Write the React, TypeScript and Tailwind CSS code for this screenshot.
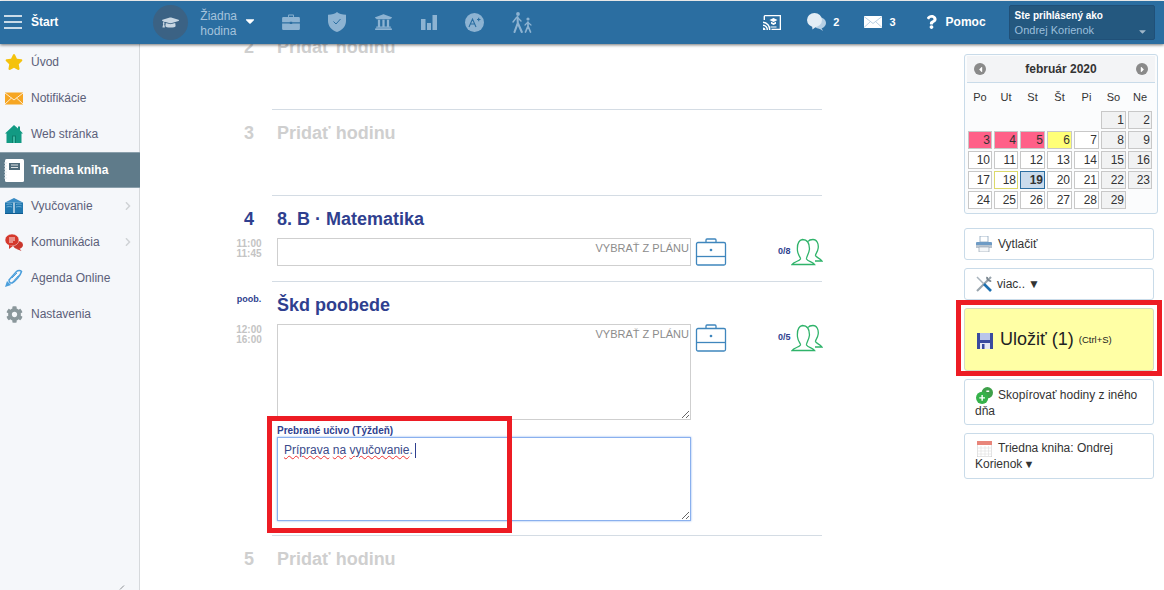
import React from "react";
import { FaStar, FaCog, FaGraduationCap, FaUniversity, FaQuestion, FaCaretDown, FaChevronRight, FaCaretLeft, FaCaretRight } from "react-icons/fa";

const F = "font-['Liberation_Sans',Arial,sans-serif]";

function Briefcase({ className = "" }: { className?: string }) {
  return (
    <svg viewBox="0 0 30 27" className={className} fill="currentColor">
      <path d="M10 5V2.5A1.5 1.5 0 0 1 11.5 1h7A1.5 1.5 0 0 1 20 2.500V5h-1.500V2.500h-7V5z" />
      <path d="M2 5h26a2 2 0 0 1 2 2v7H17v-1h-4v1H0V7a2 2 0 0 1 2-2z" />
      <path d="M0 16h13v1h4v-1h13v9a2 2 0 0 1-2 2H2a2 2 0 0 1-2-2z" />
    </svg>
  );
}
function OutlineCase() {
  return (
    <svg viewBox="0 0 32 28" className="w-[32px] h-[28px] text-[#3f86bd]" fill="none" stroke="currentColor" strokeWidth="1.300">
      <path d="M11 4.500V2a1 1 0 0 1 1-1h8a1 1 0 0 1 1 1v2.500" />
      <rect x="1.500" y="4.500" width="29" height="22.500" rx="1.500" />
      <path d="M1.500 18.500h29" />
      <circle cx="16" cy="12" r="0.700" fill="currentColor" />
    </svg>
  );
}
function People() {
  return (
    <svg viewBox="0 0 32 28" className="w-[32px] h-[28px] text-[#2fb36a]" fill="none" stroke="currentColor" strokeWidth="1.300">
      <path d="M1 26.500c2-3 7-3 8.500-5.500 .5-1-2.500-3.500-3-8-.4-4.500 0-10.500 5-11.500 4 0 7 3 7 9.500-.5 5-3.500 8-3 10 1.500 2.500 6 2.800 8 5.500z" />
      <path d="M17 3.500C18 2 20.500 1.500 22 1.500c4 0 5.700 4.500 5.200 8.500-.4 4-3 6-2.700 7.500.5 2 4.500 2.500 6.500 5.500h-7" />
    </svg>
  );
}
function Shield() {
  return (
    <svg viewBox="0 0 18 20" className="w-[18px] h-[20px]">
      <path d="M9 0c2 1.800 5 2.600 9 2.700V9c0 5-3.500 9-9 11-5.500-2-9-6-9-11V2.700C4 2.600 7 1.800 9 0z" fill="#8db3d2" />
      <path d="M5.500 9.500 8 12l4.500-5" fill="none" stroke="#2b6ea1" strokeWidth="1" />
    </svg>
  );
}
function Bars() {
  return (
    <svg viewBox="0 0 16 16" className="w-[16px] h-[16px]" fill="#8db3d2">
      <rect x="0" y="5" width="4.500" height="11" />
      <rect x="6" y="9" width="4" height="7" />
      <rect x="11.500" y="1" width="4.500" height="15" />
    </svg>
  );
}
function Grade() {
  return (
    <div className="w-[19px] h-[19px] rounded-full bg-[#8db3d2] flex items-center justify-center">
      <svg viewBox="0 0 19 19" className="w-[19px] h-[19px]" fill="none" stroke="#2b6ea1" strokeWidth="1.100">
        <path d="M4 14 7.500 6 11 14M5.300 11h4.400M12 6.500h3.500M13.700 4.800v3.400" />
      </svg>
    </div>
  );
}
function Hikers() {
  return (
    <svg viewBox="0 0 21 21" className="w-[21px] h-[21px]" fill="none" stroke="#8db3d2" strokeLinecap="round">
      <circle cx="6" cy="2" r="1.900" fill="#8db3d2" stroke="none" />
      <path d="M5.500 5 5.800 11 2.500 20M5.800 11l4 9" strokeWidth="2.100" />
      <path d="M5.500 5.500 9 9M4.500 5.500 1 10" strokeWidth="1.400" />
      <circle cx="16" cy="7" r="1.600" fill="#8db3d2" stroke="none" />
      <path d="M16 10v4l-2.500 6M16 14l2.500 6" strokeWidth="1.700" />
      <path d="M16 10.500l3 2.500M15.500 10.500 13 13" strokeWidth="1.200" />
    </svg>
  );
}
function Cast() {
  return (
    <svg viewBox="0 0 18 15" className="w-[18px] h-[15px]" fill="#fff">
      <path d="M2 0h16v15H8.500v-1.300h8.200V1.300H2V5H.6V1.500A1.500 1.500 0 0 1 2 0z" />
      <path d="M0 6.500A8 8 0 0 1 7.500 15H6A6.500 6.500 0 0 0 0 8zM0 9.500A5 5 0 0 1 5 15H3.500A3.500 3.500 0 0 0 0 11zM0 12.500A2.500 2.500 0 0 1 2.500 15H0z" />
      <path d="M10.500 3 14.500 5l-4 2-4-2zM8 6.800l2.500 1.200 2.500-1.200v2L10.500 10 8 8.800zM7.500 11.500h6V12.500h-6z" />
    </svg>
  );
}
function Bubbles() {
  return (
    <svg viewBox="0 0 19 18" className="w-[19px] h-[18px]">
      <ellipse cx="12.500" cy="10" rx="6.500" ry="5.800" fill="#b7d0e4" />
      <path d="M14 14l2 4-4.500-3z" fill="#b7d0e4" />
      <ellipse cx="7.500" cy="7" rx="7.500" ry="7" fill="#e3edf5" />
      <path d="M5 12l.5 4.500L10 13z" fill="#e3edf5" />
    </svg>
  );
}
function Mail({ w, h, bg, line }: { w: number; h: number; bg: string; line: string }) {
  return (
    <svg viewBox="0 0 18 12" width={w} height={h}>
      <rect width="18" height="12" fill={bg} />
      <path d="M0 .5 9 7.500 18 .5M0 11.500 6.500 5.500M18 11.500 11.500 5.500" fill="none" stroke={line} strokeWidth="0.800" />
    </svg>
  );
}
function House() {
  return (
    <svg viewBox="0 0 18 18" className="w-[18px] h-[18px]">
      <path d="M9 0 13 3.500V1.500h2v3.800L18 8.500H16.500V18h-15V8.500H0z" fill="#129a83" />
      <rect x="7" y="10.500" width="4" height="7.500" fill="#0c7d6a" />
      <rect x="8" y="11.500" width="2" height="6.500" fill="#3cb8a2" />
    </svg>
  );
}
function Notebook() {
  return (
    <svg viewBox="0 0 20 23" className="w-[20px] h-[23px]">
      <rect x="1" y="0" width="19" height="23" rx="1.500" fill="#fff" />
      <rect x="5" y="4" width="11" height="7" fill="#4f6b7a" />
      <path d="M7 6h7M7 8.500h7" stroke="#fff" strokeWidth="0.800" />
      <path d="M0 4h3M0 7h3M0 10h3M0 13h3M0 16h3M0 19h3" stroke="#dfe6ea" strokeWidth="1" />
    </svg>
  );
}
function Book() {
  return (
    <svg viewBox="0 0 18 16" className="w-[18px] h-[16px]">
      <path d="M9 0 18 4.500H0z" fill="#3a8cc4" />
      <path d="M0 4.500h8.400V15H0zM9.600 4.500H18V15H9.600z" fill="#2178b0" />
      <path d="M1.500 6.500c2-.6 4-.6 5.500 0M1.500 9c2-.6 4-.6 5.500 0M11 6.500c2-.6 4-.6 5.500 0M11 9c2-.6 4-.6 5.500 0" stroke="#9fd0ee" strokeWidth="0.600" fill="none" />
      <path d="M0 15h18v1H0z" fill="#0f5b8f" />
    </svg>
  );
}
function Chat() {
  return (
    <svg viewBox="0 0 18 17" className="w-[18px] h-[17px]">
      <ellipse cx="13" cy="11" rx="5" ry="4" fill="#c9362c" />
      <path d="M14 14l2.500 3-5-2z" fill="#c9362c" />
      <ellipse cx="7" cy="6" rx="7" ry="6" fill="#d5382c" stroke="#f5f7fa" strokeWidth="0.500" />
      <path d="M4 11l0 4 4-3z" fill="#d5382c" />
      <path d="M4 4h6M4 6h6M4 8h4" stroke="#fff" strokeWidth="0.900" />
    </svg>
  );
}
function Pen() {
  return (
    <svg viewBox="0 0 18 18" className="w-[18px] h-[18px]" fill="none" stroke="#4b9fdc" strokeWidth="1.500">
      <path d="M4 11 11.500 2.500c1.500-1.500 4-1.500 5 0-1 4-6 9.500-9.500 11.500-1.500.5-3-1-3-3z" />
      <path d="M7 9l5-5M9 11.500l4.500-5" strokeWidth="1" />
      <path d="M0 18l2-6 4 4z" fill="#4b9fdc" stroke="none" />
    </svg>
  );
}
function Printer() {
  return (
    <svg viewBox="0 0 16 16" className="w-[16px] h-[16px] mr-[6px] shrink-0">
      <path d="M4 0h8v6H4z" fill="#fff" stroke="#8aa3bb" strokeWidth="0.800" />
      <path d="M1 6h14a1 1 0 0 1 1 1v5H0V7a1 1 0 0 1 1-1z" fill="#6e9bc5" />
      <path d="M0 9h16v3H0z" fill="#b9c4cf" />
      <path d="M3 11h10v5H3z" fill="#f4f6f8" stroke="#9aa7b4" strokeWidth="0.700" />
    </svg>
  );
}
function Tools() {
  return (
    <svg viewBox="0 0 16 16" className="w-[16px] h-[16px] mr-[5px] shrink-0" fill="none">
      <path d="M15 1 1 15" stroke="#9aa5ae" strokeWidth="2.200" />
      <path d="M11 .8a3.800 3.800 0 0 0 4.200 4.200" stroke="#7b8790" strokeWidth="1.800" />
      <path d="M1 1 8 8" stroke="#a9b4bd" strokeWidth="1.500" />
      <path d="M8 8 15 15" stroke="#1d6fb0" strokeWidth="2.600" />
    </svg>
  );
}
function Floppy() {
  return (
    <svg viewBox="0 0 16 16" className="w-[16px] h-[16px] mr-[7px] mt-[2px] shrink-0">
      <rect width="16" height="16" fill="#3a4b9f" />
      <rect x="3" y="0" width="10" height="7" fill="#b9c5ea" />
      <rect x="3" y="10" width="10" height="6" fill="#e6e9f5" />
      <rect x="5" y="11" width="2.500" height="5" fill="#3a4b9f" />
    </svg>
  );
}
function Copy() {
  return (
    <svg viewBox="0 0 18 18" width="17" height="17">
      <circle cx="12" cy="6" r="6" fill="#3ea04a" />
      <circle cx="6.500" cy="11.500" r="6.500" fill="#35b24a" />
      <path d="M6.500 8.500v6M3.500 11.500h6M11 4.500h3" stroke="#fff" strokeWidth="1.500" />
    </svg>
  );
}
function Cal() {
  return (
    <svg viewBox="0 0 15 16" width="15" height="16">
      <rect width="15" height="16" fill="#fff" stroke="#c8c8c8" />
      <rect width="15" height="4" fill="#e8857a" />
      <path d="M1 7h13M1 10h13M1 13h13M4 5v10M8 5v10M11.500 5v10" stroke="#e2e2e2" strokeWidth="0.700" />
    </svg>
  );
}

const side: { t: string; i: React.ReactNode; chev?: boolean; active?: boolean }[] = [
  { t: "Úvod", i: <FaStar className="w-[18px] h-[18px] text-[#f4c20d]" /> },
  { t: "Notifikácie", i: <Mail w={18} h={13} bg="#f6a623" line="#fff" /> },
  { t: "Web stránka", i: <House /> },
  { t: "Triedna kniha", i: <Notebook />, active: true },
  { t: "Vyučovanie", i: <Book />, chev: true },
  { t: "Komunikácia", i: <Chat />, chev: true },
  { t: "Agenda Online", i: <Pen /> },
  { t: "Nastavenia", i: <FaCog className="w-[17px] h-[17px] text-[#8a979b]" /> },
];

type CalCell = { d?: number; k?: string };
const calCells: CalCell[] = [
  {}, {}, {}, {}, {}, { d: 1, k: "we" }, { d: 2, k: "we" },
  { d: 3, k: "red" }, { d: 4, k: "red" }, { d: 5, k: "red" }, { d: 6, k: "yel" }, { d: 7 }, { d: 8, k: "we" }, { d: 9, k: "we" },
  { d: 10 }, { d: 11 }, { d: 12 }, { d: 13 }, { d: 14 }, { d: 15, k: "we" }, { d: 16, k: "we" },
  { d: 17 }, { d: 18, k: "ybd" }, { d: 19, k: "today" }, { d: 20 }, { d: 21 }, { d: 22, k: "we" }, { d: 23, k: "we" },
  { d: 24 }, { d: 25 }, { d: 26 }, { d: 27 }, { d: 28 }, { d: 29, k: "we" }, {},
];
function cellCls(k?: string) {
  switch (k) {
    case "we": return "border-[#c8c8c8] bg-[#f1f2f3]";
    case "red": return "border-[#c8c8c8] bg-[#ff6088]";
    case "yel": return "border-[#c8c8c8] bg-[#ffff77]";
    case "ybd": return "border-[#dcd96a] bg-white";
    case "today": return "border-[#2b6ea1] bg-[#c9dbec] font-bold";
    default: return "border-[#c8c8c8] bg-white";
  }
}

function Plan({ h, handle }: { h: string; handle?: boolean }) {
  return (
    <div className="relative w-[414px] shrink-0">
      <textarea readOnly className={`block w-full ${h} border border-[#cfcfcf] outline-none ${handle ? "" : "resize-none"}`} />
      <span className="absolute top-[3px] right-[2px] text-[11px] leading-[14px] text-[#8c8c8c]">VYBRAŤ Z PLÁNU</span>
    </div>
  );
}

function Empty({ n, h }: { n: number; h: string }) {
  return (
    <section className={`border-t border-[#d4dce4] ${h} relative`}>
      <div className="flex items-center h-[46px] -ml-[44px]">
        <span className="w-[42px] text-center text-[18px] font-bold text-[#cfcfcf]">{n}</span>
        <span className="ml-[7px] text-[18px] font-bold text-[#cfcfcf]">Pridať hodinu</span>
      </div>
    </section>
  );
}

function Times({ a, b }: { a: string; b: string }) {
  return (
    <div className="w-[42px] shrink-0 text-center text-[10px] leading-[10px] font-bold text-[#c4c4c4] pt-[1px]">
      {a}<br />{b}
    </div>
  );
}

function Btn({ children, cls }: { children: React.ReactNode; cls: string }) {
  return (
    <div className={`w-[190px] border border-[#c9dbe9] rounded-[3px] px-[11px] text-[12px] leading-[15px] text-[#333] ${cls}`}>
      {children}
    </div>
  );
}

export default function App() {
  return (
    <div className={`${F} relative w-[1164px] h-[590px] overflow-hidden bg-white flex flex-col`}>
      <header className="relative z-10 h-[43px] mt-[1px] pb-[1px] shrink-0 bg-[#2b6ea1] shadow-[0_1px_3px_rgba(0,0,0,0.55)] flex items-center text-white">
        <svg viewBox="0 0 18 14" className="w-[18px] h-[14px] ml-[4px]" stroke="#fff" strokeWidth="1.500"><path d="M0 1h18M0 7h18M0 13h18" /></svg>
        <span className="ml-[9px] text-[12px] font-bold">Štart</span>
        <div className="ml-[95px] w-[35px] h-[35px] rounded-full bg-[#3b6284] flex items-center justify-center">
          <FaGraduationCap className="w-[17px] h-[17px] text-[#c8d6e2]" />
        </div>
        <div className="ml-[12px] mt-[3px] text-[12px] leading-[15px] text-[#a5c3dc] w-[40px]">Žiadna<br />hodina</div>
        <FaCaretDown className="w-[14px] h-[14px] ml-[3px] -mt-[2px] text-white" />
        <div className="ml-[25px] flex items-center gap-[28px]">
          <Briefcase className="w-[18px] h-[16px] text-[#8db3d2]" />
          <Shield />
          <FaUniversity className="w-[19px] h-[18px] text-[#8db3d2]" />
          <Bars />
          <Grade />
          <Hikers />
        </div>
        <div className="ml-[230px]"><Cast /></div>
        <div className="ml-[26px]"><Bubbles /></div>
        <span className="ml-[7px] text-[11px] font-bold">2</span>
        <div className="ml-[25px]"><Mail w={18} h={12} bg="#fff" line="#a9c4da" /></div>
        <span className="ml-[7px] text-[11px] font-bold">3</span>
        <FaQuestion className="w-[11px] h-[14px] ml-[30px]" />
        <span className="ml-[9px] text-[12px] font-bold">Pomoc</span>
        <div className="relative ml-[23px] mt-[1px] w-[146px] h-[35px] rounded-[2px] bg-[#24587f] border border-[#205078] pl-[5px] pt-[3px] leading-[14px]">
          <div className="text-[10px] font-bold text-white">Ste prihlásený ako</div>
          <div className="text-[11px] text-[#9bbfdc]">Ondrej Korienok</div>
          <FaCaretDown className="absolute right-[6px] bottom-[2px] w-[11px] h-[11px] text-[#9fb6c9]" />
        </div>
      </header>

      <div className="flex flex-1 min-h-0">
        <aside className="w-[140px] shrink-0 bg-[#f5f7fa] border-r border-[#d6d9dc] text-[12px] text-[#5b6079] relative">
          {side.map((s) => (
            <div key={s.t} className={`h-[36px] flex items-center ${s.active ? "bg-[#5f7b8a] text-white font-bold border-y border-[#8a9fab] -mr-px" : ""}`}>
              <div className="w-[31px] flex justify-center pr-[3px] shrink-0">{s.i}</div>
              <span>{s.t}</span>
              {s.chev && <FaChevronRight className="ml-auto mr-[8px] w-[6px] h-[10px] text-[#d0d3d6]" />}
            </div>
          ))}
          <svg viewBox="0 0 9 6" className="absolute right-[11px] bottom-0 w-[9px] h-[6px]" fill="none" stroke="#8b8f93"><path d="M1 5.500 5 1.500" /></svg>
        </aside>

        <main className="flex-1 min-w-0 overflow-hidden">
          <div className="w-[550px] ml-[132px] -mt-[21px]">
            <Empty n={2} h="h-[86px]" />
            <Empty n={3} h="h-[86px]" />

            <section className="border-t border-[#d4dce4] h-[86px]">
              <div className="flex items-center h-[46px] -ml-[44px]">
                <span className="w-[42px] text-center text-[18px] font-bold text-[#2f3f8f]">4</span>
                <span className="ml-[7px] text-[18px] font-bold text-[#2f3f8f]">8. B · Matematika</span>
              </div>
              <div className="flex -ml-[44px] -mt-[4px]">
                <Times a="11:00" b="11:45" />
                <div className="ml-[7px] flex">
                  <Plan h="h-[28px]" />
                  <div className="ml-[4px]"><OutlineCase /></div>
                  <span className="ml-[51px] mt-[8px] text-[9px] font-bold leading-[10px] text-[#2f3f8f]">0/8</span>
                  <div><People /></div>
                </div>
              </div>
            </section>

            <section className="border-t border-[#d4dce4] h-[254px]">
              <div className="flex items-center h-[46px] -ml-[44px]">
                <span className="w-[42px] text-center text-[9px] font-bold text-[#2f3f8f] -mt-[11px]">poob.</span>
                <span className="ml-[7px] text-[18px] font-bold text-[#2f3f8f]">Škd poobede</span>
              </div>
              <div className="flex -ml-[44px] -mt-[4px]">
                <Times a="12:00" b="16:00" />
                <div className="ml-[7px]">
                  <div className="flex">
                    <Plan h="h-[96px]" handle />
                    <div className="ml-[4px]"><OutlineCase /></div>
                    <span className="ml-[51px] mt-[8px] text-[9px] font-bold leading-[10px] text-[#2f3f8f]">0/5</span>
                    <div><People /></div>
                  </div>
                  <div className="mt-[5px] text-[10px] font-bold leading-[12px] text-[#2f3f8f]">Prebrané učivo (Týždeň)</div>
                  <div className="relative w-[414px]">
                    <textarea readOnly className="block w-full h-[84px] border border-[#8ab0ee] shadow-[0_0_2px_#8ab0ee] outline-none" />
                    <div className="absolute left-[7px] top-[6px] text-[12px] leading-[15px] text-[#3a4a8a] whitespace-nowrap flex items-stretch">
                      <span>
                        <span className="underline decoration-wavy decoration-[#e33] decoration-1">Príprava</span>{" "}
                        <span className="underline decoration-wavy decoration-[#e33] decoration-1">na</span>{" "}
                        <span className="underline decoration-wavy decoration-[#e33] decoration-1">vyučovanie</span>.
                      </span>
                      <span className="ml-[2px] border-l border-[#2f3f8f]" />
                    </div>
                  </div>
                </div>
              </div>
            </section>

            <Empty n={5} h="h-[60px]" />
          </div>
        </main>

        <aside className="w-[200px] shrink-0 pt-[10px] text-[#333]">
          <div className="w-[194px] h-[160px] border border-[#c9dbe9] rounded-[3px] bg-[#fbfcfd] px-[3px] pt-[1px]">
            <div className="-mx-[1px] h-[27px] bg-[#f3f4f6] border-b border-[#c9dbe9] flex items-center justify-between px-[7px] text-[12px] font-bold">
              <span className="w-[12px] h-[12px] rounded-full bg-[#8a8a8a] flex items-center justify-center"><FaCaretLeft className="w-[9px] h-[9px] text-white" /></span>
              <span>február 2020</span>
              <span className="w-[12px] h-[12px] rounded-full bg-[#8a8a8a] flex items-center justify-center"><FaCaretRight className="w-[9px] h-[9px] text-white" /></span>
            </div>
            <div className="grid grid-cols-[26px_26px_27px_27px_27px_27px_26px] text-[11px]">
              {["Po", "Ut", "St", "Št", "Pi", "So", "Ne"].map((d) => (
                <div key={d} className="h-[28px] pr-[2px] flex items-center justify-center">{d}</div>
              ))}
              {calCells.map((c, i) => (
                <div key={i} className="h-[20px] pr-[2px] pb-[2px]">
                  {c.d && <div className={`h-[18px] border px-[1px] text-right text-[12px] leading-[16px] ${cellCls(c.k)}`}>{c.d}</div>}
                </div>
              ))}
            </div>
          </div>

          <div className="mt-[14px] flex flex-col gap-[8px]">
            <Btn cls="h-[32px] flex items-center"><Printer />Vytlačiť</Btn>
            <Btn cls="h-[32px] flex items-center"><Tools />viac.. <span className="ml-[3px] text-[12px]">▼</span></Btn>
            <div className="w-[190px] h-[63px] border border-[#d5dcc0] rounded-[3px] bg-[#ffffa5] pl-[12px] flex items-center text-[#222]">
              <Floppy />
              <span className="text-[18px]">Uložiť (1)</span>
              <span className="ml-[5px] mt-[2px] text-[9.500px]">(Ctrl+S)</span>
            </div>
            <Btn cls="h-[46px] pt-[7px] !px-[10px]"><span className="inline-block align-middle mr-[5px] ml-[1px]"><Copy /></span>Skopírovať hodiny z iného dňa</Btn>
            <Btn cls="h-[46px] pt-[7px] !px-[10px]"><span className="inline-block align-middle mr-[6px] ml-[2px]"><Cal /></span>Triedna kniha: Ondrej Korienok<span className="ml-[1px] text-[11px]">▼</span></Btn>
          </div>
        </aside>
      </div>

      <div className="absolute left-[956px] top-[300px] w-[206px] h-[76px] border-[5px] border-[#ed1c24] pointer-events-none" />
      <div className="absolute left-[267px] top-[416px] w-[245px] h-[117px] border-[5px] border-[#ed1c24] pointer-events-none" />
    </div>
  );
}
